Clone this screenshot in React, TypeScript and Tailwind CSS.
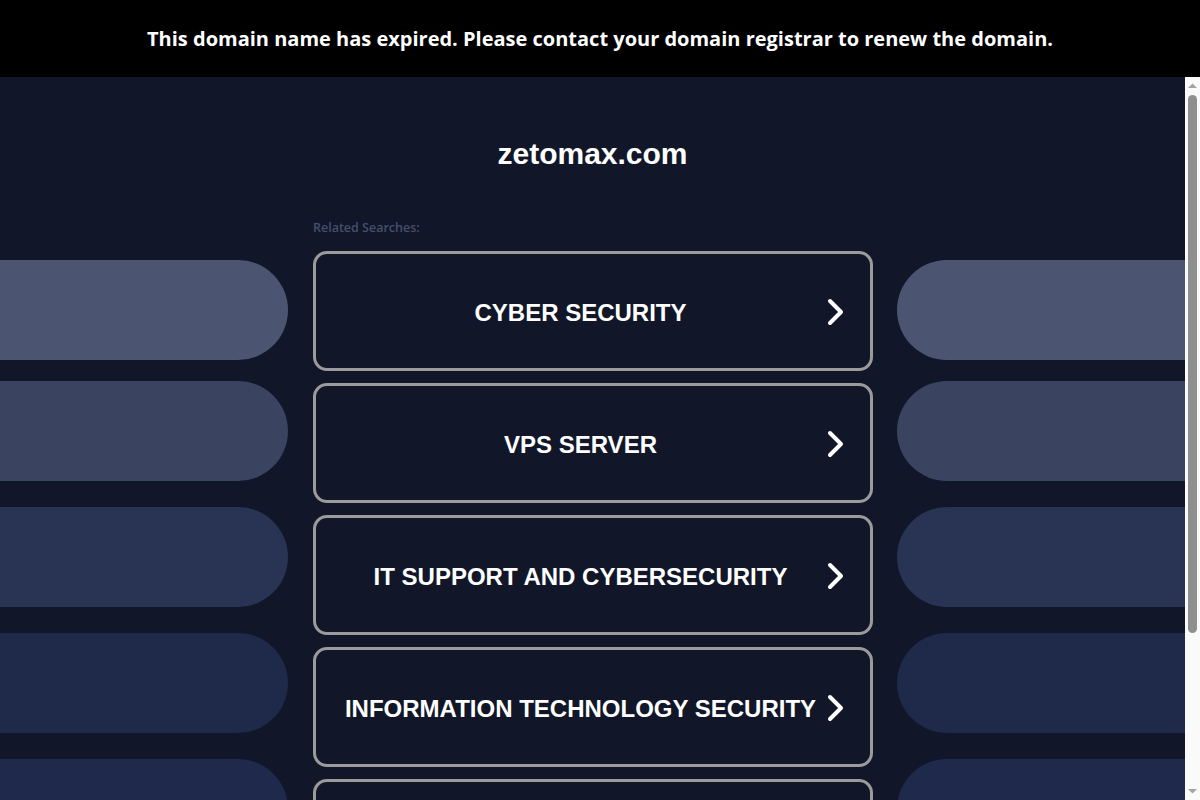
const searches = [
  "CYBER SECURITY",
  "VPS SERVER",
  "IT SUPPORT AND CYBERSECURITY",
  "INFORMATION TECHNOLOGY SECURITY",
  "WEB HOSTING",
];

const pills = [
  { color: "bg-[#4b5572]", gap: "mt-0" },
  { color: "bg-[#3a4360]", gap: "mt-[21px]" },
  { color: "bg-[#293353]", gap: "mt-[26px]" },
  { color: "bg-[#1f2949]", gap: "mt-[26px]" },
  { color: "bg-[#1e294c]", gap: "mt-[26px]" },
];

function Chevron() {
  return (
    <svg width="22" height="30" viewBox="0 0 22 30" fill="none" aria-hidden>
      <path
        d="M5 4 L16 15 L5 26"
        stroke="white"
        strokeWidth="4"
        strokeLinecap="round"
        strokeLinejoin="round"
      />
    </svg>
  );
}

function PillColumn({ side }: { side: "left" | "right" }) {
  return (
    <div className="flex flex-col pt-[41px]">
      {pills.map((p, i) => (
        <div
          key={i}
          className={`h-[100px] ${p.color} ${p.gap} ${
            side === "left" ? "rounded-r-[50px]" : "rounded-l-[50px]"
          }`}
        />
      ))}
    </div>
  );
}

// static stand-in for the browser's scrollbar
function Scrollbar() {
  return (
    <div className="w-[15px] shrink-0 bg-[#fafafa] flex flex-col items-center">
      <div className="h-[18px] flex items-center justify-center">
        <svg width="9" height="6" viewBox="0 0 9 6">
          <path d="M0 5 L4.5 0.5 L9 5 Z" fill="#a3a3a3" />
        </svg>
      </div>
      <div className="w-[9px] h-[538px] rounded-full bg-[#8f8f8f]" />
      <div className="flex-1" />
      <div className="h-[18px] flex items-center justify-center">
        <svg width="9" height="6" viewBox="0 0 9 6">
          <path d="M0 1 L4.5 5.5 L9 1 Z" fill="#a3a3a3" />
        </svg>
      </div>
    </div>
  );
}

export default function App() {
  return (
    <div className="h-screen flex flex-col bg-[#111729]">
      <div className="h-[77px] shrink-0 bg-black flex items-center justify-center">
        <p className="text-white font-bold text-[20px] font-['Open_Sans',sans-serif] pt-[1px]">
          This domain name has expired. Please contact your domain registrar to
          renew the domain.
        </p>
      </div>

      <div className="flex-1 flex min-h-0">
        <div className="flex-1 overflow-hidden">
          <h1 className="pt-[60px] text-center text-white font-bold text-[30px] leading-[34px] font-['Liberation_Sans',Arial,sans-serif]">
            zetomax.com
          </h1>

          <div className="mt-[48px] grid grid-cols-[288px_1fr_288px] pb-[34px]">
            <PillColumn side="left" />

            <div className="flex flex-col pl-[25px] pr-[24px]">
              <p className="text-[12.5px] leading-4 font-semibold text-[#454f6e] font-['Open_Sans',sans-serif] pt-[1px] mb-[15px]">
                Related Searches:
              </p>
              <div className="flex flex-col gap-[12px]">
                {searches.map((s) => (
                  <a
                    key={s}
                    href="#"
                    className="relative h-[120px] rounded-[14px] border-[3px] border-[#9b9b9b] flex items-center justify-center pl-[20px] pr-[45px] pt-[3px]"
                  >
                    <span className="text-white font-bold text-[24px] font-['Liberation_Sans',Arial,sans-serif] whitespace-nowrap">
                      {s}
                    </span>
                    <span className="absolute right-[23px] top-1/2 -translate-y-[14px] flex">
                      <Chevron />
                    </span>
                  </a>
                ))}
              </div>
            </div>

            <PillColumn side="right" />
          </div>
        </div>
        <Scrollbar />
      </div>
    </div>
  );
}
